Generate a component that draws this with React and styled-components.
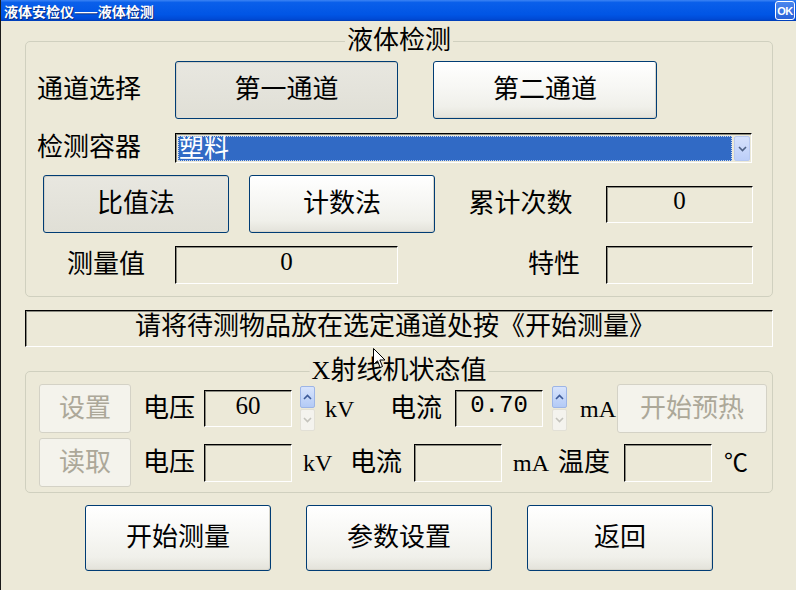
import React from "react";
import styled, { createGlobalStyle } from "styled-components";

const Global = createGlobalStyle`
  html, body { margin: 0; padding: 0; background: #ECE9D8; }
  * { box-sizing: border-box; }
`;

const Window = styled.div`
  position: relative;
  width: 796px;
  height: 590px;
  overflow: hidden;
  background: #ECE9D8;
  border-left: 1px solid #1a1a1a;
  font-family: "Liberation Serif", "Noto Sans CJK SC", serif;
  color: #000;
  display: flex;
  flex-direction: column;
`;

const TitleBar = styled.div`
  height: 21px;
  flex: none;
  display: flex;
  align-items: center;
  justify-content: space-between;
  padding: 0 1px 0 3px;
  background: linear-gradient(to bottom, #3C84F4 0%, #0A5FEA 12%, #0055E5 70%, #0049D4 92%, #003BB0 100%);
`;

const TitleText = styled.span`
  font-family: "Noto Sans CJK SC", sans-serif;
  font-weight: 700;
  font-size: 14px;
  line-height: 1;
  color: #fff;
  text-shadow: 1px 1px 0 #0A2A7A;
`;

const OkButton = styled.div`
  width: 20px;
  height: 19px;
  border: 1px solid #fff;
  border-radius: 3px;
  background: linear-gradient(to bottom, #4A86EE, #2A62D8);
  color: #fff;
  font-family: "Liberation Sans", sans-serif;
  font-weight: 700;
  font-size: 11px;
  letter-spacing: -0.5px;
  display: flex;
  align-items: center;
  justify-content: center;
`;

const Main = styled.div`
  display: flex;
  flex-direction: column;
  padding-left: 24px;
`;

const GroupBox = styled.div`
  position: relative;
  width: 748px;
  margin-top: ${(p) => p.$mt}px;
  border: 1px solid #D0D0BF;
  border-radius: 5px;
  padding: ${(p) => p.$pad};
  display: flex;
  flex-direction: column;
  gap: ${(p) => p.$gap};
`;

const GroupTitle = styled.span`
  position: absolute;
  top: -14px;
  left: 50%;
  transform: translateX(-50%);
  background: #ECE9D8;
  padding: 0 2px;
  font-size: 26px;
  line-height: 26px;
  white-space: nowrap;
`;

const Row = styled.div`
  display: flex;
  align-items: center;
  height: ${(p) => p.$h}px;
  padding-left: ${(p) => p.$pl}px;
  margin-top: ${(p) => p.$mt || 0}px;
`;

const Label = styled.span`
  flex: none;
  width: ${(p) => p.$w}px;
  margin-left: ${(p) => p.$ml || 0}px;
  text-align: ${(p) => p.$align || "left"};
  padding-right: ${(p) => p.$pr || 0}px;
  font-size: 26px;
  line-height: 30px;
  white-space: nowrap;
`;

const Unit = styled.span`
  flex: none;
  width: ${(p) => p.$w}px;
  margin-left: ${(p) => p.$ml || 0}px;
  font-size: 24px;
  line-height: 30px;
  white-space: nowrap;
`;

const Button = styled.div`
  flex: none;
  width: ${(p) => p.$w}px;
  height: ${(p) => p.$h}px;
  margin-left: ${(p) => p.$ml || 0}px;
  border: 1px solid #003C74;
  border-radius: 3px;
  background: ${(p) =>
    p.$pressed
      ? "linear-gradient(to bottom, #E8E7E0 0%, #E4E3DB 50%, #E0DFD6 100%)"
      : "linear-gradient(to bottom, #FFFFFF 0%, #F7F7F4 45%, #F0F0EA 80%, #E3E2DA 100%)"};
  box-shadow: ${(p) =>
    p.$pressed ? "inset 1px 1px 0 #D2D1C8" : "inset -1px -1px 0 #D8D6CC"};
  display: flex;
  align-items: center;
  justify-content: center;
  font-size: 26px;
  line-height: 30px;
  color: #000;
`;

const DisabledButton = styled.div`
  flex: none;
  width: ${(p) => p.$w}px;
  height: ${(p) => p.$h}px;
  margin-left: ${(p) => p.$ml || 0}px;
  border: 1px solid #D4D2C6;
  border-radius: 3px;
  background: #F4F3EC;
  display: flex;
  align-items: center;
  justify-content: center;
  font-size: 26px;
  line-height: 30px;
  color: #ACA899;
`;

const Field = styled.div`
  flex: none;
  width: ${(p) => p.$w}px;
  height: ${(p) => p.$h}px;
  margin-left: ${(p) => p.$ml || 0}px;
  border-style: solid;
  border-width: 1px;
  border-color: #000 #FFFFFF #FFFFFF #000;
  box-shadow: inset 1px 1px 0 #8A8A80;
  background: #ECE9D8;
  display: flex;
  align-items: center;
  justify-content: center;
  font-family: ${(p) => (p.$mono ? '"Liberation Mono", monospace' : '"Liberation Serif", serif')};
  font-size: ${(p) => (p.$mono ? 24 : 25)}px;
  line-height: 26px;
  padding-bottom: 6px;
`;

const StatusBox = styled(Field)`
  font-family: "Liberation Serif", "Noto Sans CJK SC", serif;
  font-size: 26px;
  margin-top: 13px;
  padding-bottom: 3px;
  padding-right: 8px;
`;

const Combo = styled.div`
  flex: none;
  width: 577px;
  height: 30px;
  border-style: solid;
  border-width: 1px;
  border-color: #000 #FFFFFF #FFFFFF #000;
  box-shadow: inset 1px 1px 0 #8A8A80;
  padding: 2px 1px 1px 2px;
  display: flex;
  gap: 2px;
`;

const ComboValue = styled.div`
  flex: 1;
  background: #316AC5;
  color: #fff;
  font-size: 25px;
  line-height: 25px;
  padding-left: 1px;
  white-space: nowrap;
  outline: 1px dotted #C8D6F0;
  outline-offset: -1px;
`;

const ComboArrow = styled.div`
  width: 16px;
  flex: none;
  border: 1px solid #B7C9F2;
  border-radius: 2px;
  background: linear-gradient(to bottom, #D6E2FC, #BCCEF8);
  display: flex;
  align-items: center;
  justify-content: center;
`;

const Spin = styled.div`
  flex: none;
  width: 15px;
  height: 45px;
  margin-left: ${(p) => p.$ml || 0}px;
  display: flex;
  flex-direction: column;
  gap: 1px;
`;

const SpinHalf = styled.div`
  flex: 1;
  border: 1px solid ${(p) => (p.$active ? "#9DB5E6" : "#E2E0D6")};
  border-radius: 2px;
  background: ${(p) =>
    p.$active ? "linear-gradient(to bottom, #D8E4FC, #B3CAF6)" : "#F4F3EE"};
  display: flex;
  align-items: center;
  justify-content: center;
`;

const BottomRow = styled.div`
  display: flex;
  justify-content: center;
  gap: 35px;
  width: 748px;
  margin-top: 12px;
`;

const Cursor = styled.svg`
  position: absolute;
  left: 372px;
  top: 348px;
`;

const Chevron = ({ up, color }) => (
  <svg width="9" height="6" viewBox="0 0 9 6">
    <path
      d={up ? "M1 5 L4.5 1.5 L8 5" : "M1 1 L4.5 4.5 L8 1"}
      fill="none"
      stroke={color}
      strokeWidth="1.6"
    />
  </svg>
);

const SpinBox = ({ ml }) => (
  <Spin $ml={ml}>
    <SpinHalf $active>
      <Chevron up color="#3D5A98" />
    </SpinHalf>
    <SpinHalf>
      <Chevron color="#C4C3BC" />
    </SpinHalf>
  </Spin>
);

export default function App() {
  return (
    <>
      <Global />
      <Window>
        <TitleBar>
          <TitleText>液体安检仪——液体检测</TitleText>
          <OkButton>OK</OkButton>
        </TitleBar>
        <Main>
          <GroupBox $mt={20} $pad="19px 0 12px 0" $gap="0px">
            <GroupTitle>液体检测</GroupTitle>
            <Row $h={58} $pl={11}>
              <Label $w={138}>通道选择</Label>
              <Button $w={223} $h={58} $pressed>第一通道</Button>
              <Button $w={224} $h={58} $ml={35}>第二通道</Button>
            </Row>
            <Row $h={30} $pl={11} $mt={14}>
              <Label $w={138}>检测容器</Label>
              <Combo>
                <ComboValue>塑料</ComboValue>
                <ComboArrow>
                  <Chevron color="#4D6185" />
                </ComboArrow>
              </Combo>
            </Row>
            <Row $h={58} $pl={17} $mt={12}>
              <Button $w={186} $h={58} $pressed>比值法</Button>
              <Button $w={186} $h={58} $ml={20}>计数法</Button>
              <Label $w={171} $align="center">累计次数</Label>
              <Field $w={147} $h={37}>0</Field>
            </Row>
            <Row $h={38} $pl={11} $mt={13}>
              <Label $w={138} $align="center">测量值</Label>
              <Field $w={223} $h={38}>0</Field>
              <Label $w={208} $align="right" $pr={26}>特性</Label>
              <Field $w={147} $h={38} />
            </Row>
          </GroupBox>

          <StatusBox $w={748} $h={37}>请将待测物品放在选定通道处按《开始测量》</StatusBox>

          <GroupBox $mt={24} $pad="12px 0 5px 0" $gap="5px">
            <GroupTitle>X射线机状态值</GroupTitle>
            <Row $h={49} $pl={13}>
              <DisabledButton $w={92} $h={49}>设置</DisabledButton>
              <Label $w={52} $ml={12}>电压</Label>
              <Field $w={88} $h={37} $ml={9}>60</Field>
              <SpinBox ml={8} />
              <Unit $w={27} $ml={10}>kV</Unit>
              <Label $w={53} $ml={38}>电流</Label>
              <Field $w={88} $h={37} $ml={12} $mono>0.70</Field>
              <SpinBox ml={9} />
              <Unit $w={30} $ml={13}>mA</Unit>
              <DisabledButton $w={150} $h={49} $ml={7}>开始预热</DisabledButton>
            </Row>
            <Row $h={49} $pl={13}>
              <DisabledButton $w={92} $h={49}>读取</DisabledButton>
              <Label $w={52} $ml={12}>电压</Label>
              <Field $w={88} $h={38} $ml={9} />
              <Unit $w={27} $ml={11}>kV</Unit>
              <Label $w={52} $ml={20}>电流</Label>
              <Field $w={88} $h={38} $ml={12} />
              <Unit $w={30} $ml={11}>mA</Unit>
              <Label $w={52} $ml={15}>温度</Label>
              <Field $w={88} $h={38} $ml={14} />
              <Unit $w={26} $ml={12}>℃</Unit>
            </Row>
          </GroupBox>

          <BottomRow>
            <Button $w={186} $h={66}>开始测量</Button>
            <Button $w={186} $h={66}>参数设置</Button>
            <Button $w={186} $h={66}>返回</Button>
          </BottomRow>
        </Main>
        <Cursor width="13" height="21" viewBox="0 0 13 21">
          <path
            d="M0.5 0.5 L0.5 16.5 L4.5 12.8 L7.2 19.5 L9.5 18.5 L6.8 12 L12 12 Z"
            fill="#fff"
            stroke="#000"
            strokeWidth="1"
            strokeLinejoin="round"
          />
        </Cursor>
      </Window>
    </>
  );
}
